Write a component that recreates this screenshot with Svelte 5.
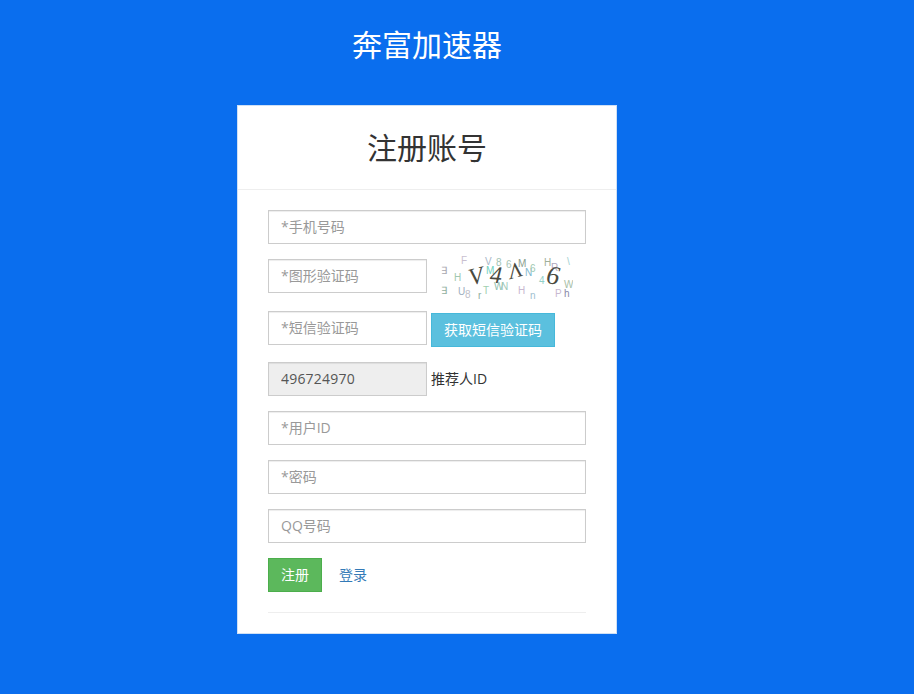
<script>
  // captcha glyphs, x/y are relative to the image
  const noise = [
    ['F', 24, 9, '#c9bfd0'], ['V', 48, 10, '#a9b8c9'], ['8', 59, 11, '#9fc4b4'], ['6', 69, 13, '#a9c4b4'],
    ['M', 81, 12, '#8aa090'], ['H', 107, 11, '#9fb09a'], ['R', 114, 16, '#b0a8c0'], ['\\', 130, 10, '#a0d0d0'],
    ['∃', 4, 19, '#a8a8b0'], ['H', 17, 26, '#a0c8b0'], ['M', 49, 19, '#70d0c0'], ['N', 88, 21, '#80b8d0'],
    ['6', 93, 17, '#a0c8b0'], ['4', 102, 29, '#90d0c8'], ['∃', 4, 39, '#90b0a0'], ['U', 21, 40, '#a0b0c0'],
    ['8', 28, 43, '#c0c0c8'], ['T', 46, 39, '#a0d0b0'], ['r', 41, 44, '#90b0a0'], ['W', 57, 35, '#90c0b0'],
    ['N', 64, 35, '#a0c8b8'], ['H', 81, 39, '#c8b8d0'], ['n', 93, 44, '#a0c0d0'], ['P', 118, 42, '#c8b8d0'],
    ['W', 127, 33, '#a8c0a8'], ['h', 127, 42, '#8888a8']
  ];
  const code = [
    ['V', 39, 29, -14, 24], ['4', 59, 28, 4, 24], ['V', 79, 24, 165, 22], ['6', 116, 29, 8, 26]
  ];
</script>

<div class="page">
  <h2 class="site-title">奔富加速器</h2>
  <div class="panel">
    <div class="panel-heading">
      <h3>注册账号</h3>
    </div>
    <form class="panel-body">
      <div class="row">
        <input class="input" type="text" placeholder="*手机号码" />
      </div>
      <div class="row captcha-row">
        <input class="input short" type="text" placeholder="*图形验证码" />
        <svg class="captcha" width="136" height="46" viewBox="0 0 136 46">
          {#each noise as [ch, x, y, color]}
            <text class="noise" x={x} y={y} fill={color}>{ch}</text>
          {/each}
          {#each code as [ch, x, y, rot, size]}
            <text class="code" x={x} y={y} font-size={size} text-anchor="middle" transform="rotate({rot} {x} {y - 8})">{ch}</text>
          {/each}
        </svg>
      </div>
      <div class="row sms-row">
        <input class="input short" type="text" placeholder="*短信验证码" />
        <button type="button" class="btn btn-info">获取短信验证码</button>
      </div>
      <div class="row referrer-row">
        <input class="input short value" type="text" value="496724970" disabled />
        <span class="referrer-label">推荐人ID</span>
      </div>
      <div class="row">
        <input class="input" type="text" placeholder="*用户ID" />
      </div>
      <div class="row">
        <input class="input" type="password" placeholder="*密码" />
      </div>
      <div class="row">
        <input class="input" type="text" placeholder="QQ号码" />
      </div>
      <div class="actions">
        <button type="button" class="btn btn-success">注册</button>
        <a class="login-link" href="#login">登录</a>
      </div>
      <hr />
    </form>
  </div>
</div>

<style>
  :global(body) {
    margin: 0;
    background: #0a6eee;
    font-family: "Open Sans", "Noto Sans CJK SC", sans-serif;
    font-size: 14px;
    color: #333;
  }

  .page {
    width: 854px;
    height: 694px;
    display: flex;
    flex-direction: column;
    align-items: center;
    overflow: hidden;
  }

  .site-title {
    margin: 20px 0 0;
    height: 85px;
    line-height: 50px;
    font-size: 30px;
    font-weight: 400;
    color: #fff;
  }

  .panel {
    width: 380px;
    box-sizing: border-box;
    background: #fff;
    border: 1px solid #cfe0f5;
  }

  .panel-heading {
    height: 83px;
    border-bottom: 1px solid #eee;
    text-align: center;
  }

  .panel-heading h3 {
    margin: 0;
    padding-top: 20px;
    line-height: 44px;
    font-size: 30px;
    font-weight: 400;
    color: #333;
  }

  .panel-body {
    padding: 20px 30px;
  }

  .row {
    display: flex;
    align-items: flex-start;
    margin-bottom: 15px;
  }

  .captcha-row {
    height: 37px;
  }

  .sms-row {
    height: 36px;
  }

  .input {
    width: 100%;
    height: 34px;
    box-sizing: border-box;
    padding: 4px 12px 6px;
    border: 1px solid #ccc;
    border-radius: 0;
    background: #fff;
    box-shadow: inset 0 1px 1px rgba(0, 0, 0, 0.075);
    font: inherit;
    color: #555;
    outline: none;
  }

  .input::placeholder {
    color: #999;
    opacity: 1;
  }

  .input:disabled {
    background: #eee;
    opacity: 1;
  }

  .input.short {
    width: 159px;
    flex: none;
  }

  .input.value {
    letter-spacing: 0.2px;
  }

  .captcha {
    margin: -4px 0 0 10px;
    flex: none;
  }

  .noise {
    font-family: "Liberation Sans", sans-serif;
    font-size: 10px;
  }

  .code {
    font-family: "Liberation Serif", serif;
    font-style: italic;
    fill: #4a4a40;
  }

  .btn {
    height: 34px;
    box-sizing: border-box;
    padding: 0 0 3px;
    border: 1px solid transparent;
    border-radius: 0;
    font: inherit;
    color: #fff;
    cursor: pointer;
  }

  .btn-info {
    width: 124px;
    margin: 2px 0 0 4px;
    background: #5bc0de;
    border-color: #46b8da;
  }

  .btn-success {
    width: 54px;
    background: #5cb85c;
    border-color: #4cae4c;
  }

  .referrer-label {
    margin-left: 4px;
    line-height: 34px;
    color: #333;
  }

  .actions {
    display: flex;
    align-items: center;
    gap: 17px;
  }

  .login-link {
    padding-bottom: 3px;
    color: #337ab7;
    text-decoration: none;
  }

  hr {
    margin: 20px 0 0;
    border: 0;
    border-top: 1px solid #eee;
  }
</style>
